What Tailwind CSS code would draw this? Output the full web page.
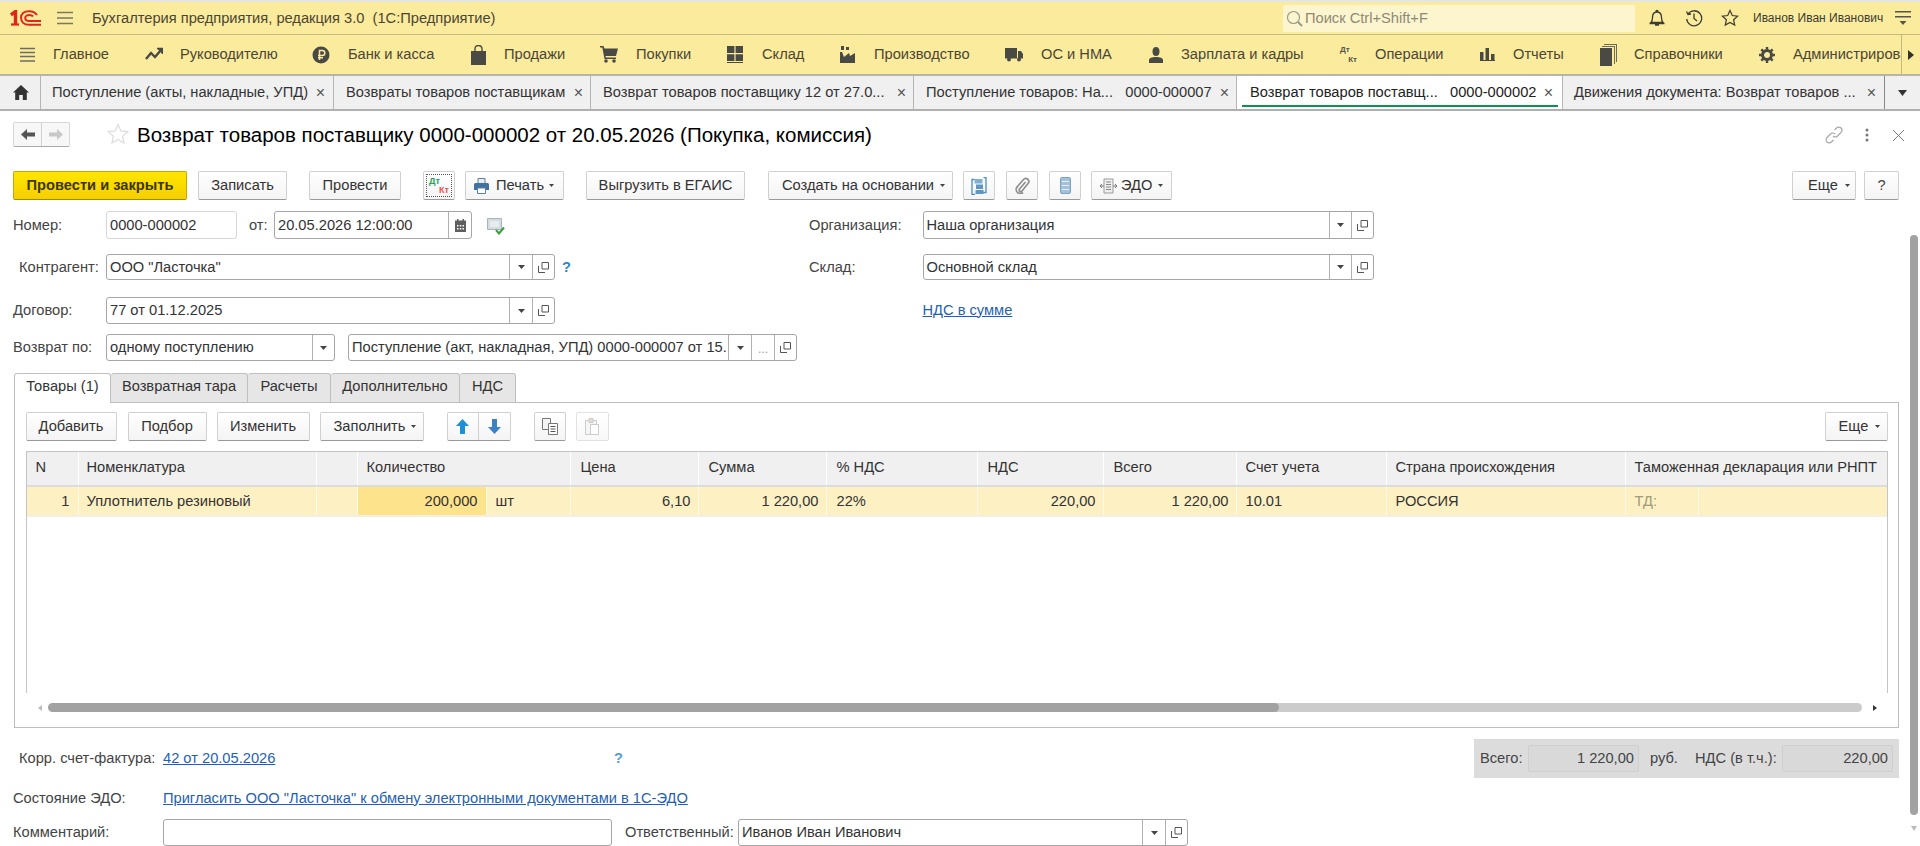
<!DOCTYPE html>
<html lang="ru">
<head>
<meta charset="utf-8">
<script src="https://cdn.jsdelivr.net/npm/@tailwindcss/browser@4"></script>
<title>Возврат товаров поставщику</title>
</head>
<body class="bg-white">
<div class="relative w-[1920px] h-[846px] overflow-hidden flex flex-col bg-white text-[14.67px] leading-none text-[#333] font-['Liberation_Sans',Arial,sans-serif]">

  <!-- Title bar -->
  <header class="h-[35px] shrink-0 flex items-center bg-[#fbeb9d] border-t-[2px] border-t-[#e6e6e0] border-b border-b-[#c4b97f]">
    <svg class="ml-[10px] w-[31px] h-[16px]" viewBox="0 0 31 16" fill="none" stroke="#e0261c"><path d="M1 5 L5.500 1.500 V14" stroke-width="3.400"/><path d="M1 14.500H9" stroke-width="2.200"/><path d="M27 5 C25 2 22 1.200 19 1.200 C14 1.200 11 4 11 7.800 C11 11.800 14 14.800 19 14.800 H31" stroke-width="2"/><path d="M23 6.500 C22 5.300 21 5 19.500 5 C17 5 15.200 6 15.200 8 C15.200 10 17 11 19.500 11 H31" stroke-width="2"/></svg>
    <svg class="ml-[16px] w-[16px] h-[14px]" viewBox="0 0 16 14" stroke="#77776a" stroke-width="1.500"><path d="M0 1.500H16M0 7H16M0 12.500H16"/></svg>
    <span class="ml-[19px] text-[#4a4636]">Бухгалтерия предприятия, редакция 3.0&nbsp; (1С:Предприятие)</span>
    <div class="ml-auto w-[352px] h-[27px] rounded-[2px] bg-[#fdf5cd] flex items-center text-[#8d8a78]">
      <svg class="ml-[3px] w-[17px] h-[17px]" viewBox="0 0 17 17" fill="none" stroke="#9a9a8c" stroke-width="1.200"><circle cx="7.500" cy="7.500" r="6"/><path d="M12 12l4 4" stroke-width="2"/></svg>
      <span class="ml-[2px]">Поиск Ctrl+Shift+F</span>
    </div>
    <svg class="ml-[13px] w-[18px] h-[18px]" viewBox="0 0 18 18" fill="none" stroke="#3c3c34" stroke-width="1.300"><path d="M3 13.500c1.500-1.500 1.500-3 1.500-5C4.500 5 6.500 3 9 3s4.500 2 4.500 5.500c0 2 0 3.500 1.500 5zM1.500 14.500h15M7 16h4M8 2.500c0-1.500 2-1.500 2 0"/></svg>
    <svg class="ml-[19px] w-[18px] h-[18px]" viewBox="0 0 18 18" fill="none" stroke="#3c3c34" stroke-width="1.300"><path d="M3 5a7.500 7.500 0 1 1-1.300 5M1.500 2.500 3 5.500l3-.5M9 4.500v5l3 2.500"/></svg>
    <svg class="ml-[18px] w-[18px] h-[18px]" viewBox="0 0 18 18" fill="none" stroke="#3c3c34" stroke-width="1.200"><path d="M9 1.500l2.300 5 5.300.6-4 3.600 1.100 5.400L9 13.400l-4.700 2.700 1.100-5.400-4-3.600 5.300-.6z"/></svg>
    <span class="ml-[14px] w-[128px] text-[12px] text-[#3c3c34] whitespace-nowrap">Иванов Иван Иванович</span>
    <svg class="ml-[14px] mr-[9px] w-[16px] h-[16px]" viewBox="0 0 16 16" fill="#55554c"><path d="M0 1h16v1.400H0zM0 6h16v1.400H0zM4.500 11h7L8 15z"/></svg>
  </header>

  <!-- Sections bar -->
  <nav class="h-[41px] shrink-0 flex items-center bg-[#fbeb9d] border-b-[2px] border-b-[#b5b5ab] text-[#4a4636] whitespace-nowrap">
    <div class="w-[145px] pl-[20px] flex items-center gap-[18px]">
      <svg class="w-[15px] h-[16px]" viewBox="0 0 15 16" stroke="#6e6c5e" stroke-width="1.300"><path d="M0 1.500H15M0 5.500H15M0 9.500H15M0 14H15"/></svg><span>Главное</span>
    </div>
    <div class="w-[167px] flex items-center gap-[17px]">
      <svg class="w-[18px] h-[14px]" viewBox="0 0 18 14" fill="none" stroke="#4a4a44" stroke-width="2.400"><path d="M1 12 L6 6 L10 10 L16 3"/><path d="M12 1.500h5.500V7" stroke-width="1.600" fill="#4a4a44"/></svg><span>Руководителю</span>
    </div>
    <div class="w-[159px] flex items-center gap-[18px]">
      <svg class="w-[18px] h-[18px]" viewBox="0 0 18 18"><circle cx="9" cy="9" r="8.500" fill="#4a4a44"/><path d="M7.500 14V4.500h2.800a2.400 2.400 0 0 1 0 5H6M6 11.800h5" fill="none" stroke="#fbeb9d" stroke-width="1.500"/></svg><span>Банк и касса</span>
    </div>
    <div class="w-[129px] flex items-center gap-[18px]">
      <svg class="w-[15px] h-[20px]" viewBox="0 0 15 20" fill="#4a4a44"><path d="M0 6h15v14H0z"/><path d="M4 8V3.500a3.500 3 0 0 1 7 0V8" fill="none" stroke="#4a4a44" stroke-width="1.400"/></svg><span>Продажи</span>
    </div>
    <div class="w-[127px] flex items-center gap-[18px]">
      <svg class="w-[18px] h-[17px]" viewBox="0 0 18 17" fill="#4a4a44"><path d="M0 0h3.500l1 2.500H18l-2 7.500H5.500l.4 1.500H16V13H4.500L2.300 1.500H0z"/><circle cx="6" cy="15" r="1.800"/><circle cx="14" cy="15" r="1.800"/></svg><span>Покупки</span>
    </div>
    <div class="w-[113px] flex items-center gap-[19px]">
      <svg class="w-[16px] h-[17px]" viewBox="0 0 16 17" fill="#4a4a44"><path d="M0 0h7.400v7H0zM8.600 0H16v7H8.600zM0 8.200h7.400V15H0zM8.600 8.200H16V15H8.600zM0 16h16v1H0z"/></svg><span>Склад</span>
    </div>
    <div class="w-[165px] flex items-center gap-[19px]">
      <svg class="w-[15px] h-[17px]" viewBox="0 0 15 17" fill="#4a4a44"><path d="M0 17V6h2l2 5 5-4 1 3 5-3v10z"/><path d="M1 0h3v4H1zM6 1h3v3H6z"/></svg><span>Производство</span>
    </div>
    <div class="w-[143px] flex items-center gap-[18px]">
      <svg class="w-[18px] h-[15px]" viewBox="0 0 18 15" fill="#4a4a44"><path d="M0 1h12v10.500H0zM13 4h3l2 3v4.500h-5z"/><circle cx="4" cy="12.500" r="2"/><circle cx="14" cy="12.500" r="2"/></svg><span>ОС и НМА</span>
    </div>
    <div class="w-[192px] flex items-center gap-[17px]">
      <svg class="w-[16px] h-[16px]" viewBox="0 0 16 16" fill="#4a4a44"><ellipse cx="8" cy="4.500" rx="3.500" ry="4.500"/><path d="M1 16v-3c0-2 3-3 7-3s7 1 7 3v3z"/></svg><span>Зарплата и кадры</span>
    </div>
    <div class="w-[140px] flex items-center gap-[18px]">
      <span class="w-[17px] h-[18px] flex flex-col text-[8px] font-bold text-[#55554c]"><span>Дт</span><span class="self-end mt-[2px]">Кт</span></span><span>Операции</span>
    </div>
    <div class="w-[120px] flex items-center gap-[18px]">
      <svg class="w-[15px] h-[14px]" viewBox="0 0 15 14" fill="#4a4a44"><path d="M0 5h3.500v8H0zM5.500 1H9v12H5.500zM11 7h3.500v6H11zM0 13h15v1H0z"/></svg><span>Отчеты</span>
    </div>
    <div class="w-[159px] flex items-center gap-[17px]">
      <svg class="w-[17px] h-[22px]" viewBox="0 0 17 22"><path d="M4 0h13v18h-1V1H4z" fill="#6a6a60"/><path d="M2 2h13v18h-1V3H2z" fill="#6a6a60"/><path d="M0 4h12v18H0z" fill="#4a4a44"/></svg><span>Справочники</span>
    </div>
    <div class="flex items-center gap-[18px] w-[142px] overflow-hidden">
      <svg class="w-[16px] h-[16px] shrink-0" viewBox="0 0 16 16" fill="none"><circle cx="8" cy="8" r="4.500" stroke="#4a4a44" stroke-width="3"/><path d="M8 0v3M8 13v3M0 8h3M13 8h3M2.300 2.300l2 2M11.700 11.700l2 2M13.700 2.300l-2 2M4.300 11.700l-2 2" stroke="#4a4a44" stroke-width="2.400"/></svg><span>Администрирование</span>
    </div>
    <div class="h-full flex-1 flex items-center justify-center border-l border-l-[#c4b97f]">
      <svg class="w-[6px] h-[10px]" viewBox="0 0 6 10" fill="#33332c"><path d="M0 0l6 5-6 5z"/></svg>
    </div>
  </nav>

  <!-- Open tabs -->
  <div class="h-[35px] shrink-0 flex bg-[#f0f0f0] border-b-[2px] border-b-[#b0b0b0] whitespace-nowrap">
    <div class="w-[41px] flex items-center pl-[13px] border-r border-r-[#b5b5b5]">
      <svg class="w-[16px] h-[15px]" viewBox="0 0 16 15" fill="#333"><path d="M8 0l8 7.500h-2.200V15H9.800v-5H6.200v5H2.200V7.500H0z"/></svg>
    </div>
    <div class="w-[293px] flex items-center justify-between pl-[11px] pr-[8px] border-r border-r-[#b5b5b5]"><span>Поступление (акты, накладные, УПД)</span><span class="text-[16px] text-[#555]">×</span></div>
    <div class="w-[257px] flex items-center justify-between pl-[12px] pr-[7px] border-r border-r-[#b5b5b5]"><span>Возвраты товаров поставщикам</span><span class="text-[16px] text-[#555]">×</span></div>
    <div class="w-[323px] flex items-center justify-between pl-[12px] pr-[7px] border-r border-r-[#b5b5b5]"><span>Возврат товаров поставщику 12 от 27.0...</span><span class="text-[16px] text-[#555]">×</span></div>
    <div class="w-[323px] flex items-center justify-between pl-[12px] pr-[7px] border-r border-r-[#b5b5b5]"><span>Поступление товаров: На...&nbsp; &nbsp;0000-000007</span><span class="text-[16px] text-[#555]">×</span></div>
    <div class="w-[325px] relative flex items-center justify-between pl-[13px] pr-[9px] bg-white text-[#222]"><span>Возврат товаров поставщ...&nbsp; &nbsp;0000-000002</span><span class="text-[16px] text-[#555]">×</span><span class="absolute left-[5px] right-[4px] bottom-[2px] h-[2px] bg-[#0e9152]"></span></div>
    <div class="w-[323px] flex items-center justify-between pl-[11px] pr-[8px] border-l border-l-[#b5b5b5] border-r border-r-[#888]"><span>Движения документа: Возврат товаров ...</span><span class="text-[16px] text-[#555]">×</span></div>
    <div class="flex-1 flex items-center justify-center">
      <svg class="w-[9px] h-[6px]" viewBox="0 0 9 6" fill="#333"><path d="M0 0h9L4.500 6z"/></svg>
    </div>
  </div>

  <!-- Document header -->
  <div class="h-[60px] shrink-0 pl-[13px] pt-[11px] pr-[16px] flex items-start">
    <div class="w-[57px] h-[25px] flex rounded-[2px] border border-[#d6d6d6] border-b-[#aaa] bg-[#f7f7f7]">
      <div class="w-[28px] flex items-center justify-center border-r border-r-[#d0d0d0]">
        <svg class="w-[14px] h-[11px]" viewBox="0 0 14 11" fill="#555"><path d="M6 0v3.500h8v4H6V11L0 5.500z"/></svg>
      </div>
      <div class="flex-1 flex items-center justify-center">
        <svg class="w-[14px] h-[11px]" viewBox="0 0 14 11" fill="#c8c8c8"><path d="M8 0v3.500H0v4h8V11l6-5.500z"/></svg>
      </div>
    </div>
    <svg class="ml-[37px] mt-[1px] w-[22px] h-[22px]" viewBox="0 0 22 22" fill="none" stroke="#dcdcdc" stroke-width="1.200"><path d="M11 1.500l2.900 6.400 6.900.7-5.200 4.600 1.500 6.800L11 16.500l-6.100 3.500 1.500-6.800-5.200-4.600 6.900-.7z"/></svg>
    <h1 class="ml-[8px] mt-[1px] text-[20.5px] leading-[23px] text-black whitespace-nowrap">Возврат товаров поставщику 0000-000002 от 20.05.2026 (Покупка, комиссия)</h1>
    <svg class="ml-auto mt-[4px] w-[18px] h-[18px]" viewBox="0 0 18 18" fill="none" stroke="#a8a8a8" stroke-width="1.200"><path d="M8 10a3 3 0 0 0 4.500 0l3.500-3.500a3 3 0 0 0-4.500-4.500L9.500 4M10 8a3 3 0 0 0-4.500 0L2 11.500A3 3 0 0 0 6.500 16L8.500 14"/></svg>
    <svg class="ml-[22px] mt-[6px] w-[4px] h-[14px]" viewBox="0 0 4 14" fill="#777"><circle cx="2" cy="2" r="1.500"/><circle cx="2" cy="7" r="1.500"/><circle cx="2" cy="12" r="1.500"/></svg>
    <svg class="ml-[24px] mt-[8px] w-[11px] h-[11px]" viewBox="0 0 11 11" stroke="#777" stroke-width="1"><path d="M0 0l11 11M11 0L0 11"/></svg>
  </div>

  <!-- Command bar -->
  <div class="h-[29px] shrink-0 pl-[13px] pr-[21px] flex whitespace-nowrap text-[#333]">
    <button class="w-[174px] h-full rounded-[2px] border border-[#c9a900] border-b-[#a68d00] bg-gradient-to-b from-[#ffe600] to-[#f5cf00] font-bold text-[#3c3600]">Провести и закрыть</button>
    <button class="ml-[11px] w-[89px] h-full rounded-[2px] border border-[#d0d0d0] border-b-[#999] bg-gradient-to-b from-white to-[#f4f4f4]">Записать</button>
    <button class="ml-[22px] w-[92px] h-full rounded-[2px] border border-[#d0d0d0] border-b-[#999] bg-gradient-to-b from-white to-[#f4f4f4]">Провести</button>
    <button class="ml-[22px] w-[32px] h-full rounded-[2px] border border-[#d0d0d0] border-b-[#999] bg-gradient-to-b from-white to-[#f4f4f4] p-[2px]">
      <span class="h-full border border-dotted border-[#555] flex flex-col px-[2px] pt-[2px] font-bold text-[9px]"><span class="text-left text-[#1aa55a]">Дт</span><span class="text-right text-[#ef5350]">Кт</span></span>
    </button>
    <button class="ml-[10px] w-[99px] h-full rounded-[2px] border border-[#d0d0d0] border-b-[#999] bg-gradient-to-b from-white to-[#f4f4f4] flex items-center pl-[8px]">
      <svg class="w-[15px] h-[16px]" viewBox="0 0 15 16"><path d="M4 .5h7v5H4z" fill="#e8edf2" stroke="#5f7f9c"/><path d="M1.500 5h12A1.500 1.500 0 0 1 15 6.500V12H0V6.500A1.500 1.500 0 0 1 1.500 5z" fill="#41729f"/><path d="M3.500 10h8v5.500h-8z" fill="#fff" stroke="#5f7f9c"/></svg>
      <span class="ml-[7px]">Печать</span><svg class="ml-[5px] w-[5px] h-[3px]" viewBox="0 0 5 3" fill="#444"><path d="M0 0h5L2.500 3z"/></svg>
    </button>
    <button class="ml-[22px] w-[159px] h-full rounded-[2px] border border-[#d0d0d0] border-b-[#999] bg-gradient-to-b from-white to-[#f4f4f4]">Выгрузить в ЕГАИС</button>
    <button class="ml-[23px] w-[185px] h-full rounded-[2px] border border-[#d0d0d0] border-b-[#999] bg-gradient-to-b from-white to-[#f4f4f4] flex items-center pl-[13px]">
      <span>Создать на основании</span><svg class="ml-[6px] w-[5px] h-[3px]" viewBox="0 0 5 3" fill="#444"><path d="M0 0h5L2.500 3z"/></svg>
    </button>
    <button class="ml-[10px] w-[32px] h-full rounded-[2px] border border-[#d0d0d0] border-b-[#999] bg-gradient-to-b from-white to-[#f4f4f4] flex items-center justify-center">
      <svg class="w-[16px] h-[18px]" viewBox="0 0 16 18"><path d="M3.500 2.500H1v15h3M12.500 .5H15v15h-3" fill="none" stroke="#4f8fc0" stroke-width="1.300"/><path d="M3.500 2h8v4.500h-8z" fill="#7fb0d4"/><path d="M5 7.500h7V12H5zM4.500 13h8v4h-8z" fill="#5f97c2"/></svg>
    </button>
    <button class="ml-[11px] w-[32px] h-full rounded-[2px] border border-[#d0d0d0] border-b-[#999] bg-gradient-to-b from-white to-[#f4f4f4] flex items-center justify-center">
      <svg class="w-[15px] h-[17px]" viewBox="0 0 15 17" fill="none" stroke="#8f8f8f" stroke-width="1.700"><path d="M10.500 5L4.500 12a1.500 1.500 0 0 0 2.500 2L13 6.500a3 3 0 0 0-4.500-4L2.500 9.500a4 4 0 0 0 5.500 6"/></svg>
    </button>
    <button class="ml-[11px] w-[32px] h-full rounded-[2px] border border-[#d0d0d0] border-b-[#999] bg-gradient-to-b from-white to-[#f4f4f4] flex items-center justify-center">
      <svg class="w-[11px] h-[17px]" viewBox="0 0 11 17"><rect x="0.500" y="0.500" width="10" height="16" rx="1.500" fill="#a3c1da" stroke="#7da3c2"/><path d="M2 4.500h7M2 8.500h7M2 12.500h7" stroke="#e8f0f6"/></svg>
    </button>
    <button class="ml-[10px] w-[81px] h-full rounded-[2px] border border-[#d0d0d0] border-b-[#999] bg-gradient-to-b from-white to-[#f4f4f4] flex items-center pl-[8px]">
      <svg class="w-[17px] h-[16px]" viewBox="0 0 17 16" fill="none" stroke="#9b9b9b"><path d="M4 1h9v14H4z" fill="#eee"/><path d="M6 4h5M6 6.500h5M6 9h5M6 11.500h5" stroke="#888"/><path d="M0 8h4M2 6l-2 2 2 2M13 8h4M15 6l2 2-2 2" stroke="#777"/></svg>
      <span class="ml-[4px]">ЭДО</span><svg class="ml-[6px] w-[5px] h-[3px]" viewBox="0 0 5 3" fill="#444"><path d="M0 0h5L2.500 3z"/></svg>
    </button>
    <button class="ml-auto w-[64px] h-full rounded-[2px] border border-[#d0d0d0] border-b-[#999] bg-gradient-to-b from-white to-[#f4f4f4] flex items-center pl-[15px]">
      <span>Еще</span><svg class="ml-[7px] w-[5px] h-[3px]" viewBox="0 0 5 3" fill="#444"><path d="M0 0h5L2.500 3z"/></svg>
    </button>
    <button class="ml-[8px] w-[35px] h-full rounded-[2px] border border-[#d0d0d0] border-b-[#999] bg-gradient-to-b from-white to-[#f4f4f4] text-[#444]">?</button>
  </div>

  <!-- Form rows -->
  <div class="mt-[11px] h-[28px] shrink-0 pl-[13px] flex items-center whitespace-nowrap">
    <div class="w-[796px] flex items-center">
      <span class="w-[93px] text-[#444]">Номер:</span>
      <div class="w-[131px] h-[28px] flex items-center pl-[3px] rounded-[3px] border border-[#d6d6d6]">0000-000002</div>
      <span class="ml-[12px] w-[25px] text-[#444]">от:</span>
      <div class="w-[198px] h-[28px] flex rounded-[3px] border border-[#a6a6a6]">
        <span class="flex-1 flex items-center pl-[3px]">20.05.2026 12:00:00</span>
        <span class="w-[23px] flex items-center justify-center border-l border-l-[#b0b0b0]">
          <svg class="w-[11px] h-[13px]" viewBox="0 0 11 13" fill="#5f5f5f"><path d="M2 0h1.500v2H2zM7.500 0H9v2H7.500zM0 1.500h11V13H0z"/><path d="M2 6h1.500v1.500H2zM4.800 6h1.500v1.500H4.800zM7.500 6H9v1.500H7.500zM2 9h1.500v1.500H2zM4.800 9h1.500v1.500H4.800zM7.500 9H9v1.500H7.500z" fill="#fff"/></svg>
        </span>
      </div>
      <svg class="ml-[15px] mt-[2px] w-[18px] h-[18px]" viewBox="0 0 18 18"><path d="M0.500 1.500h14v11h-14z" fill="#d4dbe1" stroke="#a9b4bd"/><path d="M3 4h9v6H3z" fill="#e8ecef"/><path d="M9 13l3 3.500 5-6" fill="none" stroke="#3aa13a" stroke-width="2"/></svg>
    </div>
    <span class="w-[113.500px] text-[#444]">Организация:</span>
    <div class="w-[451px] h-[28px] flex rounded-[3px] border border-[#a6a6a6]">
      <span class="flex-1 flex items-center pl-[3px]">Наша организация</span>
      <span class="w-[22px] flex items-center justify-center border-l border-l-[#b0b0b0]"><svg class="w-[7px] h-[4px]" viewBox="0 0 7 4" fill="#444"><path d="M0 0h7L3.500 4z"/></svg></span>
      <span class="w-[22px] flex items-center justify-center border-l border-l-[#b0b0b0]"><svg class="w-[11px] h-[11px]" viewBox="0 0 11 11" fill="none" stroke="#555"><path d="M4 .5h6.500V7H4zM.5 4v6.500H7"/></svg></span>
    </div>
  </div>

  <div class="mt-[15px] h-[26px] shrink-0 pl-[13px] flex items-center whitespace-nowrap">
    <div class="w-[796px] flex items-center">
      <span class="w-[93px] pl-[6px] text-[#444]">Контрагент:</span>
      <div class="w-[449px] h-[26px] flex rounded-[3px] border border-[#a6a6a6]">
        <span class="flex-1 flex items-center pl-[3px]">ООО "Ласточка"</span>
        <span class="w-[23px] flex items-center justify-center border-l border-l-[#b0b0b0]"><svg class="w-[7px] h-[4px]" viewBox="0 0 7 4" fill="#444"><path d="M0 0h7L3.500 4z"/></svg></span>
        <span class="w-[22px] flex items-center justify-center border-l border-l-[#b0b0b0]"><svg class="w-[11px] h-[11px]" viewBox="0 0 11 11" fill="none" stroke="#555"><path d="M4 .5h6.500V7H4zM.5 4v6.500H7"/></svg></span>
      </div>
      <span class="ml-[7px] font-bold text-[#2d86c4]">?</span>
    </div>
    <span class="w-[113.500px] text-[#444]">Склад:</span>
    <div class="w-[451px] h-[26px] flex rounded-[3px] border border-[#a6a6a6]">
      <span class="flex-1 flex items-center pl-[3px]">Основной склад</span>
      <span class="w-[22px] flex items-center justify-center border-l border-l-[#b0b0b0]"><svg class="w-[7px] h-[4px]" viewBox="0 0 7 4" fill="#444"><path d="M0 0h7L3.500 4z"/></svg></span>
      <span class="w-[22px] flex items-center justify-center border-l border-l-[#b0b0b0]"><svg class="w-[11px] h-[11px]" viewBox="0 0 11 11" fill="none" stroke="#555"><path d="M4 .5h6.500V7H4zM.5 4v6.500H7"/></svg></span>
    </div>
  </div>

  <div class="mt-[17px] h-[27px] shrink-0 pl-[13px] flex items-center whitespace-nowrap">
    <div class="w-[909.500px] flex items-center">
      <span class="w-[93px] text-[#444]">Договор:</span>
      <div class="w-[449px] h-[27px] flex rounded-[3px] border border-[#a6a6a6]">
        <span class="flex-1 flex items-center pl-[3px]">77 от 01.12.2025</span>
        <span class="w-[23px] flex items-center justify-center border-l border-l-[#b0b0b0]"><svg class="w-[7px] h-[4px]" viewBox="0 0 7 4" fill="#444"><path d="M0 0h7L3.500 4z"/></svg></span>
        <span class="w-[22px] flex items-center justify-center border-l border-l-[#b0b0b0]"><svg class="w-[11px] h-[11px]" viewBox="0 0 11 11" fill="none" stroke="#555"><path d="M4 .5h6.500V7H4zM.5 4v6.500H7"/></svg></span>
      </div>
    </div>
    <a class="underline text-[#1f5fb5] -mt-[1px]">НДС в сумме</a>
  </div>

  <div class="mt-[10px] h-[27px] shrink-0 pl-[13px] flex items-center whitespace-nowrap">
    <span class="w-[93px] text-[#444]">Возврат по:</span>
    <div class="w-[229px] h-[27px] flex rounded-[3px] border border-[#a6a6a6]">
      <span class="flex-1 flex items-center pl-[3px]">одному поступлению</span>
      <span class="w-[22px] flex items-center justify-center border-l border-l-[#b0b0b0]"><svg class="w-[7px] h-[4px]" viewBox="0 0 7 4" fill="#444"><path d="M0 0h7L3.500 4z"/></svg></span>
    </div>
    <div class="ml-[13px] w-[449px] h-[27px] flex rounded-[3px] border border-[#a6a6a6]">
      <span class="flex-1 flex items-center pl-[3px] overflow-hidden">Поступление (акт, накладная, УПД) 0000-000007 от 15.</span>
      <span class="w-[23px] shrink-0 flex items-center justify-center border-l border-l-[#b0b0b0]"><svg class="w-[7px] h-[4px]" viewBox="0 0 7 4" fill="#444"><path d="M0 0h7L3.500 4z"/></svg></span>
      <span class="w-[23px] shrink-0 flex items-end justify-center pb-[5px] border-l border-l-[#b0b0b0] text-[#999] text-[12px]">...</span>
      <span class="w-[22px] shrink-0 flex items-center justify-center border-l border-l-[#b0b0b0]"><svg class="w-[11px] h-[11px]" viewBox="0 0 11 11" fill="none" stroke="#555"><path d="M4 .5h6.500V7H4zM.5 4v6.500H7"/></svg></span>
    </div>
  </div>

  <!-- Tabbed panel -->
  <div class="mt-[12px] ml-[14px] w-[1885px] shrink-0 whitespace-nowrap">
    <div class="h-[29px] flex text-[#333]">
      <div class="relative z-10 w-[97px] h-[30px] flex items-center justify-center pb-[4px] bg-white rounded-t-[3px] border border-[#c0c0c0] border-b-0">Товары (1)</div>
      <div class="w-[137px] flex items-center justify-center pb-[3px] bg-[#e6e6e6] rounded-t-[3px] border-t border-r border-[#c0c0c0]">Возвратная тара</div>
      <div class="w-[83px] flex items-center justify-center pb-[3px] bg-[#e6e6e6] rounded-t-[3px] border-t border-r border-[#c0c0c0]">Расчеты</div>
      <div class="w-[129px] flex items-center justify-center pb-[3px] bg-[#e6e6e6] rounded-t-[3px] border-t border-r border-[#c0c0c0]">Дополнительно</div>
      <div class="w-[56px] flex items-center justify-center pb-[3px] bg-[#e6e6e6] rounded-t-[3px] border-t border-r border-[#c0c0c0]">НДС</div>
    </div>
    <div class="h-[326px] border border-[#bdbdbd] pt-[9px] px-[10.500px] flex flex-col">
      <div class="h-[29px] flex shrink-0">
        <button class="w-[91px] h-full rounded-[2px] border border-[#d0d0d0] border-b-[#999] bg-gradient-to-b from-white to-[#f4f4f4]">Добавить</button>
        <button class="ml-[11px] w-[79px] h-full rounded-[2px] border border-[#d0d0d0] border-b-[#999] bg-gradient-to-b from-white to-[#f4f4f4]">Подбор</button>
        <button class="ml-[10px] w-[93px] h-full rounded-[2px] border border-[#d0d0d0] border-b-[#999] bg-gradient-to-b from-white to-[#f4f4f4]">Изменить</button>
        <button class="ml-[10px] w-[104px] h-full rounded-[2px] border border-[#d0d0d0] border-b-[#999] bg-gradient-to-b from-white to-[#f4f4f4] flex items-center pl-[13px]">
          <span>Заполнить</span><svg class="ml-[6px] w-[5px] h-[3px]" viewBox="0 0 5 3" fill="#444"><path d="M0 0h5L2.500 3z"/></svg>
        </button>
        <div class="ml-[23px] w-[64px] h-full flex rounded-[2px] border border-[#d0d0d0] border-b-[#999] bg-gradient-to-b from-white to-[#f4f4f4]">
          <span class="w-[31px] flex items-center justify-center border-r border-r-[#d0d0d0]"><svg class="w-[13px] h-[15px]" viewBox="0 0 13 15" fill="#1e90d6"><path d="M6.500 0L13 7H9v8H4V7H0z"/></svg></span>
          <span class="flex-1 flex items-center justify-center"><svg class="w-[13px] h-[15px]" viewBox="0 0 13 15" fill="#3f82c4"><path d="M6.500 15L13 8H9V0H4v8H0z"/></svg></span>
        </div>
        <button class="ml-[23px] w-[32px] h-full rounded-[2px] border border-[#d0d0d0] border-b-[#999] bg-gradient-to-b from-white to-[#f4f4f4] flex items-center justify-center">
          <svg class="w-[16px] h-[17px]" viewBox="0 0 16 17" fill="#f4f4f4" stroke="#777"><path d="M.5.500h8v11h-8z"/><path d="M6.500 5.500h9v11h-9z" fill="#fff"/><path d="M8.500 8.500h5M8.500 11h5M8.500 13.500h5" stroke="#555"/></svg>
        </button>
        <button class="ml-[10px] w-[33px] h-full rounded-[2px] border border-[#e2e2e2] bg-gradient-to-b from-white to-[#f8f8f8] flex items-center justify-center">
          <svg class="w-[14px] h-[17px]" viewBox="0 0 14 17" fill="#f6f6f6" stroke="#cbcbcb"><path d="M.5 2.500h11v14H.5z"/><path d="M4 .5h4v4H4z" fill="#e8dccf"/><path d="M5.500 6.500h8v10h-8z" fill="#fff"/></svg>
        </button>
        <button class="ml-auto w-[63px] h-full rounded-[2px] border border-[#d0d0d0] border-b-[#999] bg-gradient-to-b from-white to-[#f4f4f4] flex items-center pl-[13px]">
          <span>Еще</span><svg class="ml-[7px] w-[5px] h-[3px]" viewBox="0 0 5 3" fill="#444"><path d="M0 0h5L2.500 3z"/></svg>
        </button>
      </div>

      <!-- Table -->
      <div class="mt-[10px] flex-1 flex flex-col border-x border-x-[#c4c4c4] border-t border-t-[#c4c4c4] text-[#333]">
        <div class="h-[35px] flex pb-0 bg-[#f0f0f0] border-b-[2px] border-b-[#dcdcdc] shrink-0">
          <div class="w-[52px] flex items-center pb-[3px] pl-[9px] border-r border-r-white">N</div>
          <div class="w-[238px] flex items-center pb-[3px] pl-[8px] border-r border-r-white">Номенклатура</div>
          <div class="w-[41px] border-r border-r-white"></div>
          <div class="w-[213px] flex items-center pb-[3px] pl-[9px] border-r border-r-white">Количество</div>
          <div class="w-[128px] flex items-center pb-[3px] pl-[10px] border-r border-r-white">Цена</div>
          <div class="w-[128px] flex items-center pb-[3px] pl-[10px] border-r border-r-white">Сумма</div>
          <div class="w-[151px] flex items-center pb-[3px] pl-[10px] border-r border-r-white">% НДС</div>
          <div class="w-[126px] flex items-center pb-[3px] pl-[10px] border-r border-r-white">НДС</div>
          <div class="w-[133px] flex items-center pb-[3px] pl-[10px] border-r border-r-white">Всего</div>
          <div class="w-[150px] flex items-center pb-[3px] pl-[9px] border-r border-r-white">Счет учета</div>
          <div class="w-[239px] flex items-center pb-[3px] pl-[9px] border-r border-r-white">Страна происхождения</div>
          <div class="flex-1 flex items-center pb-[3px] pl-[9px] overflow-hidden">Таможенная декларация или РНПТ</div>
        </div>
        <div class="h-[30px] flex bg-[#fdf1c3] border-b-[2px] border-b-[#f3f0e2] shrink-0">
          <div class="w-[52px] flex items-center justify-end pr-[8px] border-r border-r-[#fffbe8]">1</div>
          <div class="w-[238px] flex items-center pl-[8px] border-r border-r-[#fffbe8]">Уплотнитель резиновый</div>
          <div class="w-[41px] border-r border-r-[#fffbe8]"></div>
          <div class="w-[129px] flex items-center justify-end pr-[8px] bg-[#fee38d] border-r border-r-[#fffbe8]">200,000</div>
          <div class="w-[84px] flex items-center pl-[9px] border-r border-r-[#fffbe8]">шт</div>
          <div class="w-[128px] flex items-center justify-end pr-[7px] border-r border-r-[#fffbe8]">6,10</div>
          <div class="w-[128px] flex items-center justify-end pr-[7px] border-r border-r-[#fffbe8]">1 220,00</div>
          <div class="w-[151px] flex items-center pl-[10px] border-r border-r-[#fffbe8]">22%</div>
          <div class="w-[126px] flex items-center justify-end pr-[7px] border-r border-r-[#fffbe8]">220,00</div>
          <div class="w-[133px] flex items-center justify-end pr-[7px] border-r border-r-[#fffbe8]">1 220,00</div>
          <div class="w-[150px] flex items-center pl-[9px] border-r border-r-[#fffbe8]">10.01</div>
          <div class="w-[239px] flex items-center pl-[9px] border-r border-r-[#fffbe8]">РОССИЯ</div>
          <div class="w-[73px] flex items-center pl-[9px] border-r border-r-[#fffbe8] text-[#a09a80]">ТД:</div>
          <div class="flex-1"></div>
        </div>
      </div>
      <!-- Horizontal scrollbar -->
      <div class="h-[34px] flex items-start pt-[10px] shrink-0">
        <svg class="ml-[12px] mt-[2px] w-[4px] h-[6px]" viewBox="0 0 4 6" fill="#bbb"><path d="M4 0v6L0 3z"/></svg>
        <div class="ml-[6px] w-[1814px] h-[9px] rounded-full bg-[#cbcbcb] overflow-hidden">
          <div class="w-[1231px] h-full rounded-full bg-[#a2a2a2]"></div>
        </div>
        <svg class="ml-[11px] mt-[2px] w-[4px] h-[6px]" viewBox="0 0 4 6" fill="#333"><path d="M0 0v6l4-3z"/></svg>
      </div>
    </div>
  </div>

  <!-- Totals row -->
  <div class="mt-[11px] h-[39px] shrink-0 pr-[21px] flex items-center whitespace-nowrap">
    <span class="ml-[19px] w-[144px] text-[#444]">Корр. счет-фактура:</span>
    <a class="w-[451px] underline text-[#1f5fb5]">42 от 20.05.2026</a>
    <span class="font-bold text-[#5b9bd0]">?</span>
    <div class="ml-auto w-[425px] h-full bg-[#dcdcdc] flex items-center pl-[6px] text-[#444]">
      <span class="w-[48px]">Всего:</span>
      <span class="w-[111px] h-[27px] flex items-center justify-end pr-[4px] rounded-[2px] border border-[#cfcfcf] bg-[#d9d9d9]">1 220,00</span>
      <span class="ml-[11px] w-[45px]">руб.</span>
      <span class="w-[87px]">НДС (в т.ч.):</span>
      <span class="w-[111px] h-[27px] flex items-center justify-end pr-[4px] rounded-[2px] border border-[#cfcfcf] bg-[#d9d9d9]">220,00</span>
    </div>
  </div>

  <div class="h-[40px] shrink-0 flex items-center whitespace-nowrap">
    <span class="ml-[13px] w-[150px] text-[#444]">Состояние ЭДО:</span>
    <a class="underline text-[#1f5fb5]">Пригласить ООО "Ласточка" к обмену электронными документами в 1С-ЭДО</a>
  </div>

  <div class="mt-[1px] h-[27px] shrink-0 flex items-center whitespace-nowrap">
    <span class="ml-[13px] w-[150px] text-[#444]">Комментарий:</span>
    <div class="w-[449px] h-[27px] rounded-[3px] border border-[#a6a6a6]"></div>
    <span class="ml-[13px] w-[113px] text-[#444]">Ответственный:</span>
    <div class="w-[450px] h-[27px] flex rounded-[3px] border border-[#a6a6a6]">
      <span class="flex-1 flex items-center pl-[3px]">Иванов Иван Иванович</span>
      <span class="w-[23px] flex items-center justify-center border-l border-l-[#b0b0b0]"><svg class="w-[7px] h-[4px]" viewBox="0 0 7 4" fill="#444"><path d="M0 0h7L3.500 4z"/></svg></span>
      <span class="w-[22px] flex items-center justify-center border-l border-l-[#b0b0b0]"><svg class="w-[11px] h-[11px]" viewBox="0 0 11 11" fill="none" stroke="#555"><path d="M4 .5h6.500V7H4zM.5 4v6.500H7"/></svg></span>
    </div>
  </div>

  <!-- Vertical scrollbar (overlay) -->
  <div class="absolute right-[2px] top-[235px] w-[8px] h-[580px] rounded-full bg-[#a2a2a2]"></div>
  <svg class="absolute right-[3px] top-[826px] w-[6px] h-[5px]" viewBox="0 0 6 5" fill="#bbb"><path d="M0 0h6L3 5z"/></svg>
</div>
</body>
</html>
